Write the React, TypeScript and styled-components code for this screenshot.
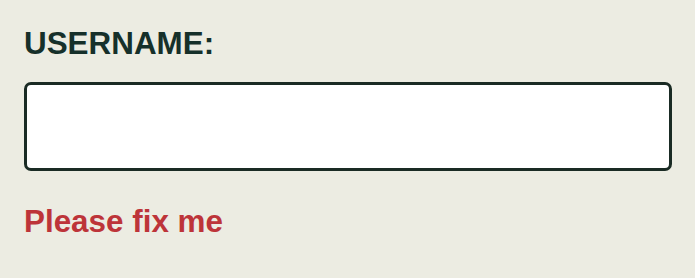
import React from 'react';
import styled, { createGlobalStyle } from 'styled-components';

const GlobalStyle = createGlobalStyle`
  html, body {
    margin: 0;
    padding: 0;
    background: #ecece2;
  }
  body {
    font-family: "Liberation Sans", Arial, sans-serif;
  }
`;

const Page = styled.div`
  min-height: 278px;
  padding: 26px 24px 0 24px;
  box-sizing: border-box;
  background: #ecece2;
`;

const Field = styled.div`
  display: flex;
  flex-direction: column;
`;

const Label = styled.label`
  font-size: 31.4px;
  line-height: 36px;
  font-weight: bold;
  color: #16302a;
  margin-bottom: 20px;
`;

const Input = styled.input`
  box-sizing: border-box;
  width: 648px;
  height: 89px;
  border: 3px solid #1a2b24;
  border-radius: 7px;
  background: #ffffff;
  outline: none;
  padding: 0 14px;
  font-size: 24px;
  font-family: inherit;
`;

const ErrorText = styled.p`
  margin: 33px 0 0 0;
  font-size: 31.4px;
  line-height: 36px;
  font-weight: bold;
  color: #bd3439;
`;

export default function App() {
  return (
    <>
      <GlobalStyle />
      <Page>
        <Field>
          <Label htmlFor="username">USERNAME:</Label>
          <Input id="username" type="text" />
          <ErrorText>Please fix me</ErrorText>
        </Field>
      </Page>
    </>
  );
}
